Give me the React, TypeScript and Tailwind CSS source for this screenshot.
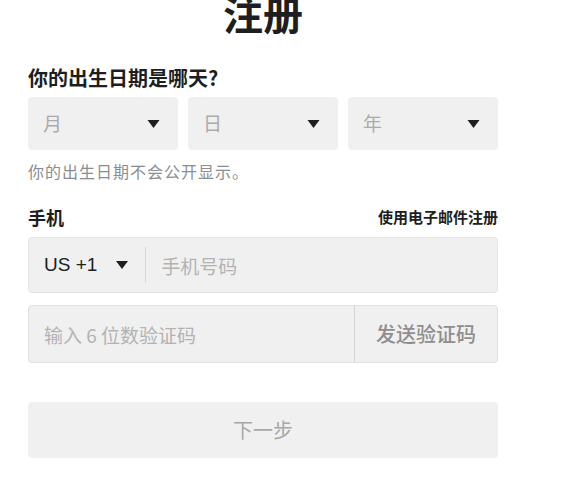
import { useState } from "react";

function Caret({ className = "" }: { className?: string }) {
  return (
    <svg viewBox="0 0 12 8" className={className} aria-hidden>
      <path d="M0 0h12L6 8z" fill="#1c1e21" />
    </svg>
  );
}

const FONT = { fontFamily: '"Noto Sans CJK SC", "Liberation Sans", sans-serif' };

export default function App() {
  const [phone, setPhone] = useState("");
  const [code, setCode] = useState("");

  return (
    <div className="min-h-[486px] w-[561px] overflow-hidden bg-white" style={FONT}>
      <div className="ml-[28px] w-[470px]">
        {/* Title */}
        <h1 className="-mt-[11px] text-center text-[40px] font-bold leading-[48px] text-[#1c1e21]">注册</h1>

        {/* Birthday */}
        <p className="mt-[29px] text-[20px] font-bold leading-[24px] text-[#1c1e21]">你的出生日期是哪天?</p>
        <div className="mt-[7px] grid grid-cols-3 gap-[10px]">
          {["月", "日", "年"].map((label) => (
            <div key={label} className="flex h-[53px] items-center justify-between rounded-[4px] bg-[#f0f0f0] pl-[15px] pr-[18px]">
              <span className="text-[19px] text-[#ababab]">{label}</span>
              <Caret className="h-[8px] w-[13px]" />
            </div>
          ))}
        </div>
        <p className="mt-[11px] text-[16px] leading-[20px] tracking-[1px] text-[#8a8d91]">你的出生日期不会公开显示。</p>

        {/* Phone */}
        <div className="mt-[24px] flex h-[24px] items-center justify-between">
          <span className="text-[18px] font-bold text-[#1c1e21]">手机</span>
          <button className="text-[15px] font-bold text-[#1c1e21]">使用电子邮件注册</button>
        </div>
        <div className="mt-[8px] flex h-[56px] items-center rounded-[4px] border border-[#e4e4e4] bg-[#f0f0f0]">
          <div className="flex items-center gap-[19px] pl-[15px] pr-[17px]">
            <span className="text-[19px] text-[#1c1e21]" style={{ fontFamily: '"Liberation Sans", sans-serif' }}>US +1</span>
            <Caret className="h-[8px] w-[12px]" />
          </div>
          <div className="h-[36px] w-px bg-[#d8d8d8]" />
          <input
            value={phone}
            onChange={(e) => setPhone(e.target.value)}
            placeholder="手机号码"
            className="h-full flex-1 bg-transparent pl-[15px] text-[19px] text-[#1c1e21] outline-none placeholder:text-[#b3b3b3]"
          />
        </div>

        {/* Verification code */}
        <div className="mt-[12px] flex h-[58px] rounded-[4px] border border-[#e0e0e0] bg-[#f0f0f0]">
          <input
            value={code}
            onChange={(e) => setCode(e.target.value)}
            placeholder="输入 6 位数验证码"
            className="h-full w-[325px] bg-transparent pl-[15px] text-[19px] text-[#1c1e21] outline-none placeholder:text-[#b3b3b3]"
          />
          <button className="flex-1 border-l border-[#d4d4d4] text-[20px] font-medium text-[#8e8e8e]">发送验证码</button>
        </div>

        {/* Next */}
        <button className="mt-[39px] h-[56px] w-full rounded-[4px] bg-[#f0f0f0] text-[20px] text-[#a8a8a8]">下一步</button>
      </div>
    </div>
  );
}
